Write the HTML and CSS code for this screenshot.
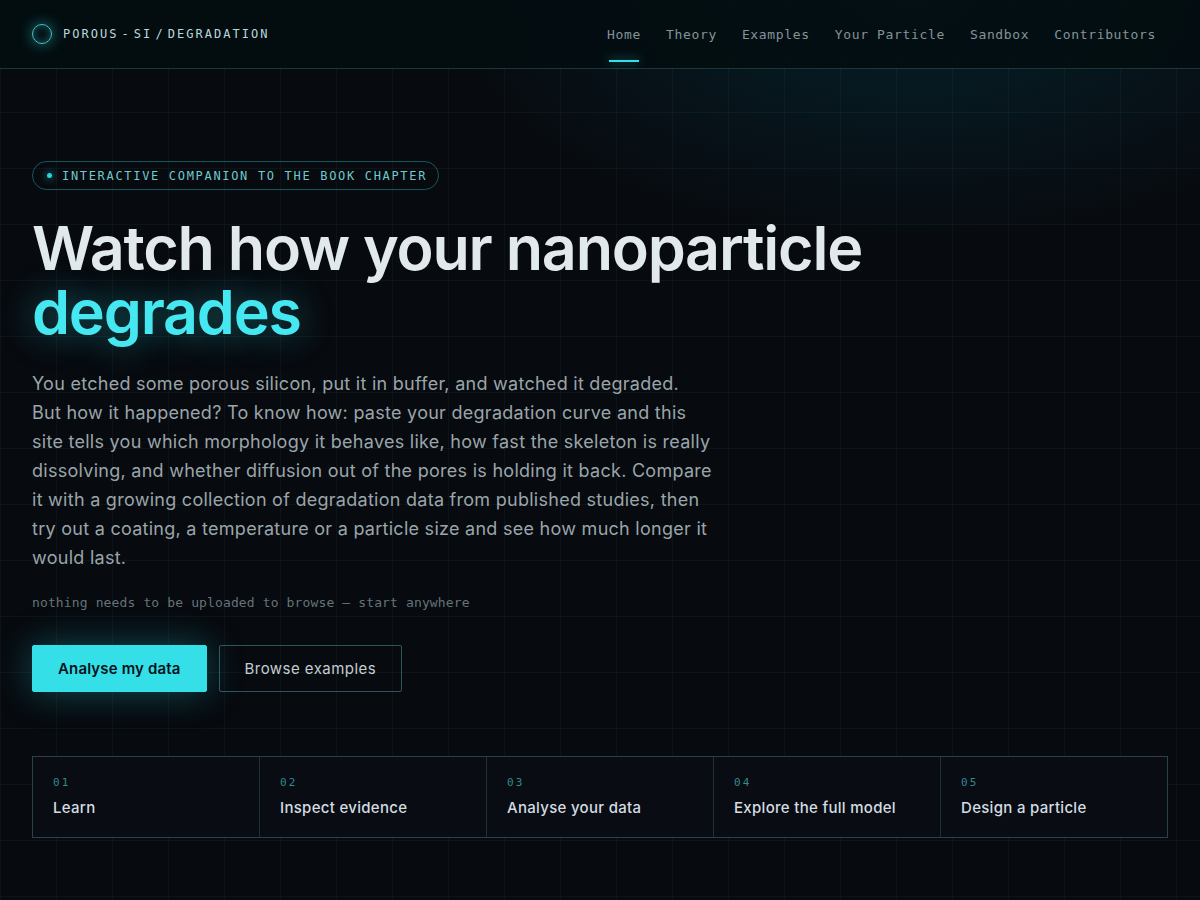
FILE: index.html
```html
<!DOCTYPE html>
<html lang="en">
<head>
    <meta charset="UTF-8">
    <meta name="viewport" content="width=device-width, initial-scale=1">
    <title>Porous-Si / Degradation</title>
    <link rel="stylesheet" href="styles.css">
</head>
<body>
    <header class="site-header">
        <a class="brand" href="#">
            <span class="brand-mark"></span>
            <span class="brand-name">POROUS<span class="sep">-</span>SI<span class="sep">/</span>DEGRADATION</span>
        </a>
        <nav class="nav">
            <a class="active" href="#">Home</a>
            <a href="#">Theory</a>
            <a href="#">Examples</a>
            <a href="#">Your Particle</a>
            <a href="#">Sandbox</a>
            <a href="#">Contributors</a>
        </nav>
    </header>

    <main class="hero">
        <p class="badge"><span class="dot"></span>INTERACTIVE COMPANION TO THE BOOK CHAPTER</p>
        <h1>Watch how your nanoparticle <br><em>degrades</em></h1>
        <p class="lead">
            You etched some porous silicon, put it in buffer, and watched it degraded.<br>
            But how it happened? To know how: paste your degradation curve and this site
            tells you which morphology it behaves like, how fast the skeleton is really
            dissolving, and whether diffusion out of the pores is holding it back. Compare
            it with a growing collection of degradation data from published studies, then
            try out a coating, a temperature or a particle size and see how much longer it
            would last.
        </p>
        <p class="note">nothing needs to be uploaded to browse — start anywhere</p>

        <div class="actions">
            <button class="btn btn-primary" type="button">Analyse my data</button>
            <button class="btn btn-ghost" type="button">Browse examples</button>
        </div>

        <!-- Steps -->
        <div class="steps">
            <a href="#"><span class="num">01</span><span class="label">Learn</span></a>
            <a href="#"><span class="num">02</span><span class="label">Inspect evidence</span></a>
            <a href="#"><span class="num">03</span><span class="label">Analyse your data</span></a>
            <a href="#"><span class="num">04</span><span class="label">Explore the full model</span></a>
            <a href="#"><span class="num">05</span><span class="label">Design a particle</span></a>
        </div>
    </main>
</body>
</html>
```
FILE: styles.css
```css
:root {
    --cyan: #35dfe8;
    --sans: "Inter", "Noto Sans", sans-serif;
    --mono: "DejaVu Sans Mono", "Liberation Mono", monospace;
}
* {
    box-sizing: border-box;
}
body {
    margin: 0;
    min-height: 100vh;
    background-color: #070a0f;
    background-image:
        linear-gradient(rgba(140, 210, 215, 0.045) 1px, transparent 1px),
        linear-gradient(90deg, rgba(140, 210, 215, 0.045) 1px, transparent 1px),
        radial-gradient(ellipse 480px 250px at 76% 0, rgba(0, 140, 165, 0.17), transparent);
    background-size: 56px 56px, 56px 56px, auto;
    color: #e1e9ec;
    font-family: var(--sans);
}
a {
    color: inherit;
    text-decoration: none;
}
.site-header {
    display: flex;
    align-items: center;
    justify-content: space-between;
    height: 69px;
    padding: 0 32px;
    background: rgba(3, 13, 17, 0.9);
    border-bottom: 1px solid rgba(95, 180, 185, 0.25);
}
.brand {
    display: flex;
    align-items: center;
    gap: 11px;
    color: #b9d8dc;
    font: 12px var(--mono);
    letter-spacing: 0.17em;
}
.brand-mark {
    width: 20px;
    height: 20px;
    border: 1px solid #4cc4ca;
    border-radius: 50%;
    box-shadow: 0 0 14px rgba(53, 223, 232, 0.5), inset 0 0 8px rgba(53, 223, 232, 0.35);
}
.sep {
    margin: 0 3px;
}
.nav {
    display: flex;
    gap: 1px;
}
.nav a {
    position: relative;
    padding: 20px 12px;
    color: #84939a;
    font: 13px var(--mono);
    letter-spacing: 0.05em;
}
.nav .active::after {
    content: "";
    position: absolute;
    left: 14px;
    right: 14px;
    bottom: 0;
    height: 2px;
    background: var(--cyan);
    box-shadow: 0 0 10px rgba(53, 223, 232, 0.6);
}
.hero {
    padding: 92px 32px 60px;
}
.badge {
    display: inline-flex;
    align-items: center;
    gap: 10px;
    height: 29px;
    margin: 0;
    padding: 0 11px 0 14px;
    border: 1px solid rgba(53, 200, 208, 0.4);
    border-radius: 15px;
    color: #6fc9cd;
    font: 12px var(--mono);
    letter-spacing: 0.14em;
}
.dot {
    width: 5px;
    height: 5px;
    border-radius: 50%;
    background: #1fd8e0;
    box-shadow: 0 0 8px var(--cyan);
}
h1 {
    margin: 26px 0 0;
    font-size: 61px;
    font-weight: 600;
    line-height: 64px;
    letter-spacing: -0.02em;
}
h1 em {
    color: #45e8f0;
    font-style: normal;
    text-shadow: 0 0 36px rgba(53, 223, 232, 0.45);
}
.lead {
    max-width: 688px;
    margin: 25px 0 0;
    color: #9aa5aa;
    font-size: 18px;
    line-height: 29px;
    letter-spacing: 0.015em;
}
.note {
    margin: 22px 0 0;
    color: #65737a;
    font: 13px/18px var(--mono);
    letter-spacing: 0.01em;
}
.actions {
    display: flex;
    gap: 12px;
    margin-top: 33px;
}
.btn {
    height: 47px;
    padding: 0 25px;
    border: 1px solid var(--cyan);
    border-radius: 2px;
    font: 15px var(--sans);
    cursor: pointer;
}
.btn-primary {
    background: var(--cyan);
    color: #04141a;
    font-weight: 600;
    letter-spacing: 0.01em;
    box-shadow: 0 0 36px rgba(30, 200, 210, 0.35);
}
.btn-ghost {
    background: transparent;
    border-color: rgba(90, 175, 185, 0.45);
    color: #c3ced2;
    letter-spacing: 0.03em;
}
/* the 1px gaps show the background as dividers */
.steps {
    display: grid;
    grid-template-columns: repeat(5, 1fr);
    gap: 1px;
    margin-top: 64px;
    background: #1d3136;
    border: 1px solid #24444a;
}
.steps a {
    display: flex;
    flex-direction: column;
    gap: 7px;
    padding: 18px 20px 19px;
    background: #090c13;
}
.num {
    color: #2f8b8d;
    font: 11px/16px var(--mono);
    letter-spacing: 0.2em;
}
.label {
    color: #d3dde1;
    font-size: 15px;
    font-weight: 500;
    line-height: 20px;
    letter-spacing: 0.02em;
}
```
